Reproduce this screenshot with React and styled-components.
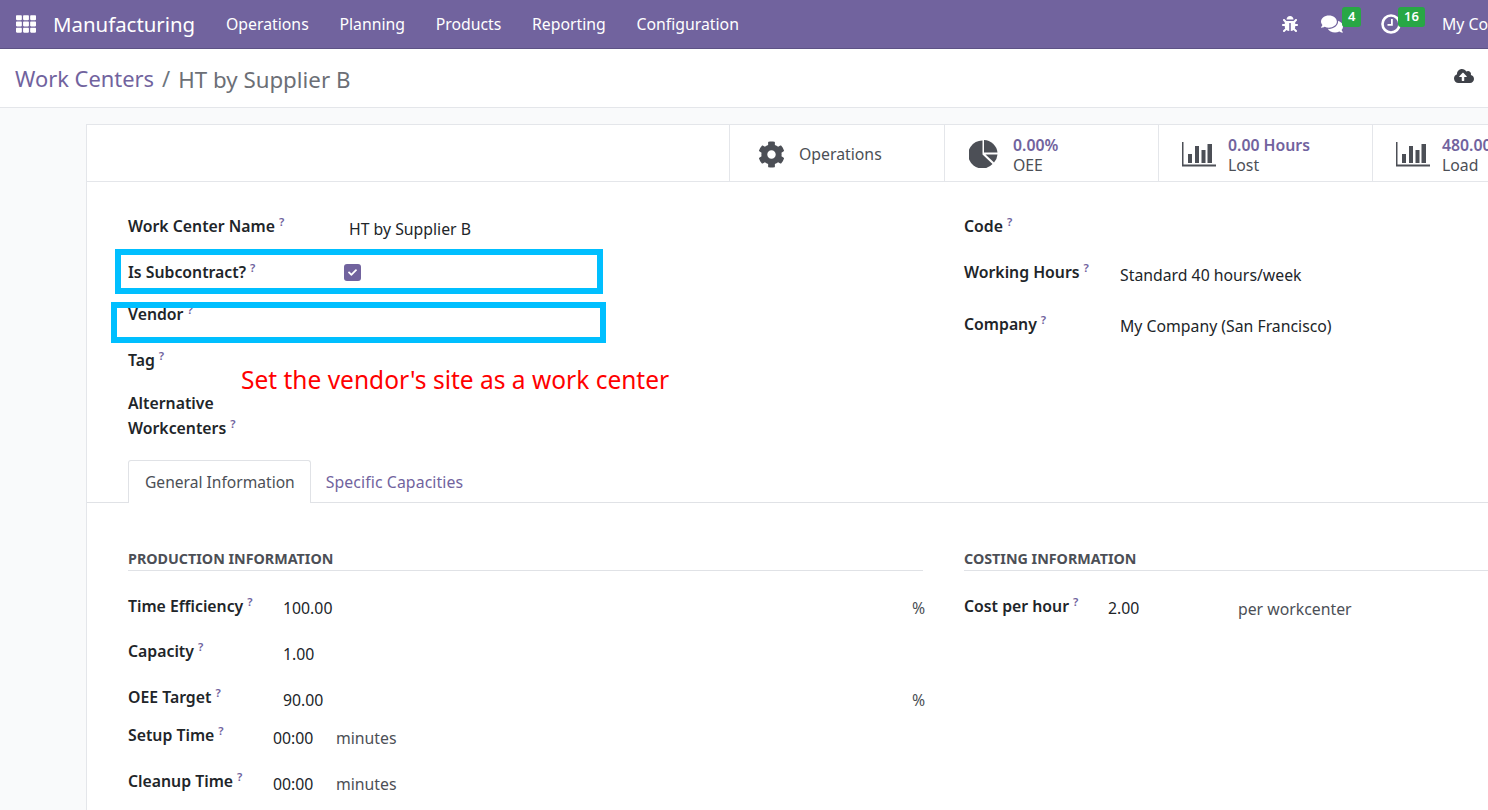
import * as React from 'react';
import styled, { createGlobalStyle } from 'styled-components';
import { FaBug, FaCheck, FaCloudUploadAlt, FaCog, FaComments, FaTh } from 'react-icons/fa';

const leftFields = [
  { label: 'Work Center Name', value: 'HT by Supplier B', height: 46, valueTop: 3 },
  { label: 'Is Subcontract?', checkbox: true, height: 42 },
  { label: 'Vendor', height: 46 },
  { label: 'Tag', height: 44 },
];

const rightFields = [
  { label: 'Code', height: 46 },
  { label: 'Working Hours', value: 'Standard 40 hours/week', height: 52, valueTop: 3 },
  { label: 'Company', value: 'My Company (San Francisco)', height: 46, valueTop: 2 },
];

const productionFields = [
  { label: 'Time Efficiency', value: '100.00', unit: '%', height: 45, valueTop: 2 },
  { label: 'Capacity', value: '1.00', height: 46, valueTop: 3 },
  { label: 'OEE Target', value: '90.00', unit: '%', height: 38, valueTop: 3 },
  { label: 'Setup Time', value: '00:00', minutes: true, height: 46, valueTop: 3 },
  { label: 'Cleanup Time', value: '00:00', minutes: true, height: 46, valueTop: 3 },
];

const BarsIcon = () => (
  <svg width='34' height='25' viewBox='0 0 34 25'>
    <path fill='#4c4f56' d='M0 0h1.5v22.500H34V24.500H0z' />
    <path fill='#4c4f56' d='M6 12h4v9H6zM13 4h4v17h-4zM19.500 8h4v13h-4zM25.500 2h4.500v19h-4.500z' />
  </svg>
);

const PieIcon = () => (
  <svg width='30' height='28' viewBox='0 0 30 28'>
    <path fill='#4c4f56' d='M13.500.5V14.500L23.500 24A14 14 0 1 1 13.500.5z' />
    <path fill='#4c4f56' d='M15 0A14 14 0 0 1 28.500 12.500H15z' />
    <path fill='#4c4f56' d='M16.500 14.500H28.500A14 14 0 0 1 25 22.500z' />
  </svg>
);

const ClockIcon = () => (
  <svg width='20' height='20' viewBox='0 0 20 20'>
    <circle cx='10' cy='10' r='8.500' fill='none' stroke='#fff' strokeWidth='2.600' />
    <path fill='#fff' d='M10 5h1.800v6.800H6.500V10H10z' />
  </svg>
);

const Help = () => <HelpMark>?</HelpMark>;

const App = () => {
  return (
    <Page>
      <GlobalStyle />
      <NavBar>
        <AppsButton><FaTh size={20} /></AppsButton>
        <Brand>Manufacturing</Brand>
        <Menu>
          {['Operations', 'Planning', 'Products', 'Reporting', 'Configuration'].map((item) => (
            <MenuItem key={item}>{item}</MenuItem>
          ))}
        </Menu>
        <Systray>
          <TrayIcon $width={39}><FaBug size={16} /></TrayIcon>
          <TrayIcon $width={60}>
            <FaComments size={22} />
            <Badge $left={31}>4</Badge>
          </TrayIcon>
          <TrayIcon $width={71}>
            <ClockIcon />
            <Badge $left={27}>16</Badge>
          </TrayIcon>
          <CompanyName>My Company (San Francisco)</CompanyName>
        </Systray>
      </NavBar>

      <ControlPanel>
        <Breadcrumb>
          <CrumbLink>Work Centers</CrumbLink>
          <CrumbSeparator>/</CrumbSeparator>
          <CrumbActive>HT by Supplier B</CrumbActive>
        </Breadcrumb>
        <SaveIcon><FaCloudUploadAlt size={20} /></SaveIcon>
      </ControlPanel>

      <Content>
        <Sheet>
          <ButtonBox>
            <StatButton $width={215}>
              <StatIcon $width={41} $offset={5}><FaCog size={27} color='#4c4f56' /></StatIcon>
              <StatPlain>Operations</StatPlain>
            </StatButton>
            <StatButton>
              <StatIcon $width={44} $offset={1}><PieIcon /></StatIcon>
              <StatText><StatValue>0.00%</StatValue><StatLabel>OEE</StatLabel></StatText>
            </StatButton>
            <StatButton>
              <StatIcon><BarsIcon /></StatIcon>
              <StatText><StatValue>0.00 Hours</StatValue><StatLabel>Lost</StatLabel></StatText>
            </StatButton>
            <StatButton>
              <StatIcon><BarsIcon /></StatIcon>
              <StatText><StatValue>480.00 Minutes</StatValue><StatLabel>Load</StatLabel></StatText>
            </StatButton>
          </ButtonBox>

          <TopForm>
            <Annotation $left={28} $top={67} $width={488} $height={45} />
            <Annotation $left={24} $top={120} $width={495} $height={41} />
            <RedNote>Set the vendor's site as a work center</RedNote>

            <LeftColumn>
              {leftFields.map((field) => (
                <FieldRow key={field.label} $height={field.height}>
                  <FieldLabel $width={221}>{field.label}<Help /></FieldLabel>
                  {field.value && <FieldValue $top={field.valueTop}>{field.value}</FieldValue>}
                  {field.checkbox && <CheckBox><FaCheck size={9} /></CheckBox>}
                </FieldRow>
              ))}
              <WrappedLabel>Alternative<br />Workcenters<Help /></WrappedLabel>
            </LeftColumn>

            <RightColumn>
              {rightFields.map((field) => (
                <FieldRow key={field.label} $height={field.height}>
                  <FieldLabel $width={156}>{field.label}<Help /></FieldLabel>
                  {field.value && <FieldValue $top={field.valueTop}>{field.value}</FieldValue>}
                </FieldRow>
              ))}
            </RightColumn>
          </TopForm>

          <Tabs>
            <Tab $active>General Information</Tab>
            <Tab>Specific Capacities</Tab>
          </Tabs>

          <TabBody>
            <LeftGroup>
              <GroupTitle>Production Information</GroupTitle>
              {productionFields.map((field) => (
                <FieldRow key={field.label} $height={field.height}>
                  <FieldLabel $width={field.minutes ? 145 : 155}>{field.label}<Help /></FieldLabel>
                  <FieldValue $top={field.valueTop} $width={field.minutes ? 63 : 629}>{field.value}</FieldValue>
                  {field.unit && <Unit $top={field.valueTop}>{field.unit}</Unit>}
                  {field.minutes && <Unit $top={field.valueTop}>minutes</Unit>}
                </FieldRow>
              ))}
            </LeftGroup>
            <RightGroup>
              <GroupTitle>Costing Information</GroupTitle>
              <FieldRow $height={46}>
                <FieldLabel $width={144}>Cost per hour<Help /></FieldLabel>
                <FieldValue $top={2} $width={130}>2.00</FieldValue>
                <Unit $top={3}>per workcenter</Unit>
              </FieldRow>
            </RightGroup>
          </TabBody>
        </Sheet>
      </Content>
    </Page>
  );
};

export default App;

/* STYLED COMPONENTS */
const GlobalStyle = createGlobalStyle`
  html, body {
    margin: 0;
    height: 100%;
    overflow: hidden;
  }
  body {
    font-family: "Noto Sans", "Open Sans", sans-serif;
    font-size: 15.800px;
    color: #212529;
  }
`;

const Page = styled.div`
  width: 1488px;
  height: 810px;
  overflow: hidden;
  display: flex;
  flex-direction: column;
  background: #f9fafb;
`;

const NavBar = styled.header`
  height: 49px;
  flex: none;
  box-sizing: border-box;
  display: flex;
  align-items: center;
  background: #71639e;
  border-bottom: 1px solid #5d5285;
  color: #fff;
`;

const AppsButton = styled.div`
  width: 53px;
  padding-left: 16px;
  box-sizing: border-box;
  display: flex;
`;

const Brand = styled.div`
  width: 173px;
  font-size: 20.400px;
`;

const Menu = styled.nav`
  display: flex;
  gap: 30.700px;
  flex: 1;
`;

const MenuItem = styled.div`
  font-size: 15.800px;
`;

const Systray = styled.div`
  display: flex;
  align-items: center;
  flex: none;
  width: 228px;
  white-space: nowrap;
  padding-left: 12px;
  box-sizing: border-box;
`;

const TrayIcon = styled.div`
  position: relative;
  width: ${(p) => p.$width}px;
  height: 24px;
  flex: none;
  display: flex;
  align-items: center;
  padding-left: 10px;
  box-sizing: border-box;
`;

const Badge = styled.span`
  position: absolute;
  left: ${(p) => p.$left}px;
  top: -5px;
  padding: 0 6px;
  height: 20px;
  line-height: 18px;
  border-radius: 3px;
  background: #28a745;
  color: #fff;
  font-size: 13px;
  font-weight: 600;
`;

const CompanyName = styled.div`
  font-size: 15.800px;
`;

const ControlPanel = styled.div`
  height: 59px;
  flex: none;
  box-sizing: border-box;
  display: flex;
  align-items: center;
  justify-content: space-between;
  padding: 0 14px 0 15px;
  background: #fff;
  border-bottom: 1px solid #e4e6ea;
`;

const Breadcrumb = styled.div`
  display: flex;
  gap: 8px;
  font-size: 21.900px;
  padding-top: 2px;
`;

const CrumbLink = styled.span`
  color: #71639e;
`;

const CrumbSeparator = styled.span`
  color: #6c757d;
`;

const CrumbActive = styled.span`
  color: #6c6f76;
  font-size: 22.300px;
`;

const SaveIcon = styled.div`
  display: flex;
  color: #3f4249;
  padding-bottom: 4px;
`;

const Content = styled.main`
  flex: 1;
  min-height: 0;
  padding: 16px 0 0 86px;
`;

const Sheet = styled.div`
  width: 1500px;
  min-height: 700px;
  box-sizing: border-box;
  background: #fff;
  border: 1px solid #e4e6ea;
`;

const ButtonBox = styled.div`
  height: 57px;
  box-sizing: border-box;
  display: flex;
  padding-left: 642px;
  border-bottom: 1px solid #e4e6ea;
`;

const StatButton = styled.div`
  width: ${(p) => p.$width || 214}px;
  flex: none;
  box-sizing: border-box;
  display: flex;
  align-items: center;
  padding: 2px 0 0 23px;
  border-left: 1px solid #e4e6ea;
  white-space: nowrap;
`;

const StatIcon = styled.div`
  width: ${(p) => p.$width || 46}px;
  margin-left: ${(p) => p.$offset || 0}px;
  flex: none;
  display: flex;
`;

const StatPlain = styled.div`
  color: #4c4f56;
`;

const StatText = styled.div`
  display: flex;
  flex-direction: column;
  line-height: 20px;
  margin-top: 1px;
`;

const StatValue = styled.span`
  color: #71639e;
  font-weight: 600;
`;

const StatLabel = styled.span`
  color: #4c4f56;
`;

const TopForm = styled.div`
  position: relative;
  height: 278px;
  display: flex;
  box-sizing: border-box;
  padding: 32px 0 0 41px;
`;

const LeftColumn = styled.div`
  width: 836px;
  flex: none;
`;

const RightColumn = styled.div`
  flex: 1;
`;

const FieldRow = styled.div`
  height: ${(p) => p.$height}px;
  display: flex;
  align-items: flex-start;
`;

const FieldLabel = styled.div`
  width: ${(p) => p.$width}px;
  flex: none;
  font-weight: 600;
  line-height: 24px;
  white-space: nowrap;
`;

const WrappedLabel = styled.div`
  font-weight: 600;
  line-height: 25px;
  margin-top: -1px;
`;

const HelpMark = styled.sup`
  color: #71639e;
  font-size: 11.500px;
  font-weight: 600;
  margin-left: 4px;
  line-height: 0;
`;

const FieldValue = styled.div`
  width: ${(p) => (p.$width ? `${p.$width}px` : 'auto')};
  flex: none;
  margin-top: ${(p) => p.$top || 0}px;
  line-height: 24px;
`;

const Unit = styled.div`
  margin-top: ${(p) => p.$top || 0}px;
  color: #4c4f56;
  line-height: 24px;
`;

const CheckBox = styled.div`
  width: 17px;
  height: 17px;
  margin: 4px 0 0 -5px;
  border-radius: 3px;
  background: #71639e;
  color: #fff;
  display: flex;
  align-items: center;
  justify-content: center;
`;

const Annotation = styled.div`
  position: absolute;
  box-sizing: border-box;
  left: ${(p) => p.$left}px;
  top: ${(p) => p.$top}px;
  width: ${(p) => p.$width}px;
  height: ${(p) => p.$height}px;
  border: 6px solid #00bfff;
`;

const RedNote = styled.div`
  position: absolute;
  left: 154px;
  top: 181px;
  color: #ff0000;
  font-size: 24.500px;
  white-space: nowrap;
`;

const Tabs = styled.div`
  height: 43px;
  box-sizing: border-box;
  display: flex;
  padding-left: 41px;
  border-bottom: 1px solid #e0e2e6;
`;

const Tab = styled.div`
  height: 43px;
  box-sizing: border-box;
  padding: ${(p) => (p.$active ? '0 15px 0 16px' : '0 15px 0 14px')};
  display: flex;
  align-items: center;
  font-size: ${(p) => (p.$active ? '15.600px' : '15.800px')};
  letter-spacing: ${(p) => (p.$active ? '0' : '0.100px')};
  color: ${(p) => (p.$active ? '#4c4f56' : '#71639e')};
  background: ${(p) => (p.$active ? '#fff' : 'transparent')};
  border: 1px solid ${(p) => (p.$active ? '#e0e2e6' : 'transparent')};
  border-bottom: none;
  border-radius: 3px 3px 0 0;
`;

const TabBody = styled.div`
  display: flex;
  padding: 46px 0 0 41px;
`;

const LeftGroup = styled.div`
  width: 795px;
  flex: none;
  margin-right: 41px;
`;

const RightGroup = styled.div`
  flex: 1;
`;

const GroupTitle = styled.div`
  box-sizing: border-box;
  height: 22px;
  margin-bottom: 23px;
  border-bottom: 1px solid #e0e2e6;
  color: #4c4f56;
  font-size: 14.300px;
  font-weight: 700;
  line-height: 19px;
  text-transform: uppercase;
`;
